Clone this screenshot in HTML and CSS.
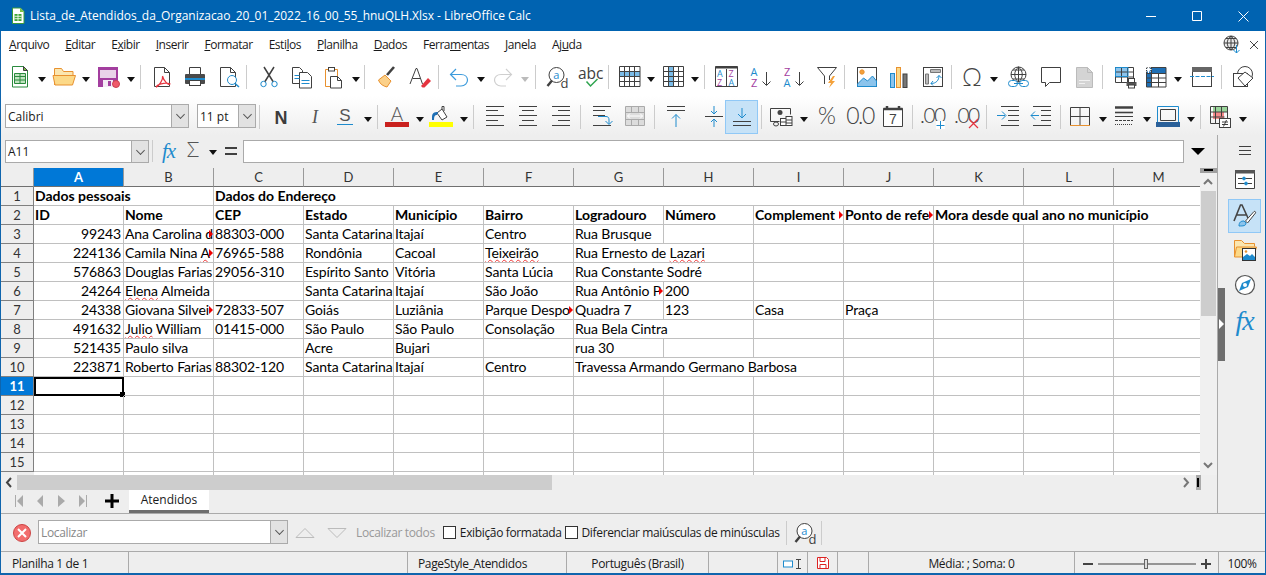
FILE: index.html
```html
<!DOCTYPE html>
<html lang="pt-BR">
<head>
<meta charset="utf-8">
<title>Lista_de_Atendidos - LibreOffice Calc</title>
<link rel="stylesheet" href="styles.css">
</head>
<body>
<div class="window">
  <header class="titlebar">
    <svg class="appicon" viewBox="0 0 14 18"><path fill="#fff" stroke="#3a9a3a" d="M1.5 1h8l3.500 3.500v12h-11.500z"/><path fill="#7ac143" d="M9 1l4 4H9z"/><path fill="#3fa535" d="M3.500 7h7v7h-7z"/><path stroke="#fff" stroke-width=".8" d="M3.500 9.300h7M3.500 11.700h7M7 7v7"/></svg>
    <span class="title">Lista_de_Atendidos_da_Organizacao_20_01_2022_16_00_55_hnuQLH.Xlsx - LibreOffice Calc</span>
    <div class="winctl">
      <svg viewBox="-18 0 46 20"><path d="M0 10.500h10" stroke="#fff"/></svg>
      <svg viewBox="-18 0 46 20"><path d="M.5 5.500h9v9h-9z" stroke="#fff" fill="none"/></svg>
      <svg viewBox="-18 0 46 20"><path d="M.5 5.500l10 10M10.500 5.500l-10 10" stroke="#fff" fill="none"/></svg>
    </div>
  </header>

  <nav class="menubar">
    <span><u>A</u>rquivo</span><span><u>E</u>ditar</span><span>E<u>x</u>ibir</span><span><u>I</u>nserir</span><span><u>F</u>ormatar</span><span>Esti<u>l</u>os</span><span><u>P</u>lanilha</span><span><u>D</u>ados</span><span>Ferra<u>m</u>entas</span><span><u>J</u>anela</span><span>Aj<u>u</u>da</span>
    <div class="menuend">
      <svg class="i" viewBox="0 0 24 24"><circle cx="11" cy="10" r="7" fill="#e9e9e9"/><path d="M4 10h14M11 3v14M6 5.500h10M6 14.500h10M11 3c-5 4-5 10 0 14M11 3c5 4 5 10 0 14"/><path stroke="#1e8bcd" d="M16.500 12v8M13.500 17l3 3 3-3"/></svg>
      <svg class="x" viewBox="0 0 10 10"><path d="M1 1l8 8M9 1l-8 8" stroke="#444" fill="none"/></svg>
    </div>
  </nav>

  <div class="tb tb1">
    <svg class="i" viewBox="0 0 24 24"><path fill="#fff" stroke="#2a8a3e" d="M4.500 1.500h11l4 4v16.500h-15z"/><path fill="#7ac143" d="M15.500 1.500l4 4h-4z"/><path fill="#bfe3bf" stroke="#2a8a3e" d="M6.500 8.500h11v10h-11z"/><path stroke="#2a8a3e" d="M6.500 11.500h11M6.500 15h11M12 8.500v10"/></svg>
    <i class="dd"></i>
    <svg class="i" viewBox="0 0 24 24"><path fill="#fbe6b0" stroke="#e8912f" d="M2.500 20V3.500h7l2 3h9.500v4"/><path fill="#fcd988" stroke="#e8912f" d="M1 10.500h22.500l-3 9.500h-17.500z"/></svg>
    <i class="dd"></i>
    <svg class="i" viewBox="0 0 24 24"><rect x="1" y="2" width="20" height="20" fill="#a33e9f" stroke="none"/><rect x="3" y="5" width="16" height="8" fill="#e9d3e9" stroke="none"/><rect x="6" y="15" width="10" height="7" fill="#f4eaf4" stroke="none"/><rect x="11" y="16" width="3" height="5" fill="#a33e9f" stroke="none"/><circle cx="19" cy="19" r="3.500" fill="#f05a6a" stroke="#c9414f"/></svg>
    <i class="dd"></i>
    <i class="sep"></i>
    <svg class="i" viewBox="0 0 24 24"><path fill="#fff" d="M3.500 2.500h10l5 5v14h-15z"/><path d="M13.500 2.500v5h5"/><path stroke="#e5343f" stroke-width="1.200" d="M11.500 11c1 4-4 10-6 11-1-2.500 9-5 13.500-3-1.500 2-6.500-3.500-7.500-8z"/></svg>
    <svg class="i" viewBox="0 0 24 24"><path fill="#fff" d="M6.500 9V2.500h11V9"/><rect x="2" y="9" width="20" height="10" rx="1" fill="#4a4a4a" stroke="none"/><rect x="2" y="13" width="20" height="2" fill="#1e8bcd" stroke="none"/><rect x="6.500" y="15.500" width="11" height="5" fill="#fff"/></svg>
    <svg class="i" viewBox="0 0 24 24"><path fill="#fff" d="M3.500 2.500h10l5 5v14h-15z"/><path d="M13.500 2.500v5h5"/><circle cx="15" cy="15" r="4.500" fill="#fff" stroke="#1e8bcd"/><path stroke="#1e8bcd" stroke-width="1.600" d="M18 18.500l4 3.500"/></svg>
    <i class="sep"></i>
    <svg class="i" viewBox="0 0 24 24"><circle cx="6.500" cy="19" r="2.700" stroke="#1e8bcd"/><circle cx="17.500" cy="19" r="2.700" stroke="#1e8bcd"/><path stroke-width="1.500" d="M8 16.500L17 2M16 16.500L7 2"/></svg>
    <svg class="i" viewBox="0 0 24 24"><path fill="#fff" d="M2.500 2.500h7l3 3v13h-10z"/><path fill="#fff" d="M9.500 7.500h8l4 4v11.500h-12z"/><path stroke="#1e8bcd" d="M4.500 10.500h5M4.500 13.500h5M11.500 15.500h8M11.500 18.500h8"/></svg>
    <svg class="i" viewBox="0 0 24 24"><path fill="#fff" stroke="#e8912f" d="M4.500 4.500h12v17h-12z"/><rect x="7.500" y="2.500" width="6" height="3.500" fill="#fff"/><path fill="#fff" d="M9.500 11.500h7l4 4v7.500h-11z"/><path d="M16.500 11.500v4h4"/></svg>
    <i class="dd"></i>
    <i class="sep"></i>
    <svg class="i" viewBox="0 0 24 24"><path stroke-width="2.600" d="M20 2l-7 8"/><path fill="#fbd089" stroke="#e8912f" d="M4.500 15l6.500-5 6 6-4 6c-3-.5-7.500-3-8.500-7z"/></svg>
    <svg class="i" viewBox="0 0 24 24"><path d="M3 19L9 3.500h1L15.500 19M5.500 13.500h8"/><path fill="#e5343f" stroke="none" d="M14 21l7-8 3 3-6.500 6.500h-2z"/></svg>
    <i class="sep"></i>
    <svg class="i" viewBox="0 0 24 24"><path stroke="#3d9bdc" stroke-width="1.200" d="M4 9.500h10c4 0 6.500 2.500 6.500 5.500s-2.500 6-6.500 6H9M9 4L3.500 9.500 9 15"/></svg>
    <i class="dd"></i>
    <svg class="i" viewBox="0 0 24 24"><path stroke="#cfcfcf" stroke-width="1.200" d="M20 9.500H10c-4 0-6.500 2.500-6.500 5.500s2.500 6 6.500 6h5M15 4l5.500 5.500L15 15"/></svg>
    <i class="dd off"></i>
    <i class="sep"></i>
    <svg class="i" viewBox="0 0 24 24"><circle cx="11.500" cy="10" r="7.500" fill="#fff"/><path stroke-width="2.400" d="M7 15.500L2.500 21"/><text x="8.200" y="13.500" font-size="11" fill="#1e8bcd" stroke="none">a</text><text x="15.500" y="22.500" font-size="13" fill="#404040" stroke="none">d</text></svg>
    <svg class="i" viewBox="0 0 24 24"><text x="0" y="13.500" font-size="15.500" fill="#404040" stroke="none">abc</text><path stroke="#2ea44f" stroke-width="1.500" d="M8.500 16.500l4 4.500 7-7"/></svg>
    <i class="sep"></i>
    <svg class="i" viewBox="0 0 24 24"><path fill="#7bbce8" stroke="none" d="M3 7h20v5H3z"/><path fill="none" d="M2.500 1.500h20.500v20H2.500zM2.500 6.500h20.500M2.500 11.500h20.500M2.500 16.500h20.500M7.500 1.500v20M12.500 1.500v20M17.500 1.500v20"/></svg>
    <i class="dd"></i>
    <svg class="i" viewBox="0 0 24 24"><path fill="#7bbce8" stroke="none" d="M8 2h5v20H8z"/><path fill="none" d="M2.500 1.500h20v20h-20zM2.500 6.500h20M2.500 11.500h20M2.500 16.500h20M7.500 1.500v20M12.500 1.500v20M17.500 1.500v20"/></svg>
    <i class="dd"></i>
    <i class="sep"></i>
    <svg class="i" viewBox="0 0 24 24"><path d="M1.500 1.500h22v20h-22zM12.500 4v17"/><path stroke-width="2" d="M1.500 2.500h22"/><text x="3" y="12" font-size="9" fill="#1e8bcd" stroke="none">A</text><text x="3" y="20.500" font-size="9" fill="#a33e9f" stroke="none">Z</text><text x="14.500" y="12" font-size="9" fill="#a33e9f" stroke="none">Z</text><text x="14.500" y="20.500" font-size="9" fill="#1e8bcd" stroke="none">A</text></svg>
    <svg class="i" viewBox="0 0 24 24"><text x="1.500" y="10.500" font-size="11" fill="#1e8bcd" stroke="none">A</text><text x="2" y="21.500" font-size="11" fill="#a33e9f" stroke="none">Z</text><path d="M17.500 7v13M13.500 16.500l4 4 4-4"/></svg>
    <svg class="i" viewBox="0 0 24 24"><text x="2" y="10.500" font-size="11" fill="#a33e9f" stroke="none">Z</text><text x="1.500" y="21.500" font-size="11" fill="#1e8bcd" stroke="none">A</text><path d="M17.500 7v13M13.500 16.500l4 4 4-4"/></svg>
    <svg class="i" viewBox="0 0 24 24"><path d="M2.500 2.500h19l-7 8.500v4M9.500 19v-8l-7-8.500"/><path fill="#f4a13a" stroke="none" d="M18 11l-5 7h3l-2 5 6-7h-3l3-5z"/></svg>
    <i class="sep"></i>
    <svg class="i" viewBox="0 0 24 24"><rect x="2.500" y="2.500" width="19" height="19" fill="#fff"/><circle cx="7" cy="7" r="2.200" fill="#f4a13a" stroke="#e8912f"/><path fill="#8cc4ec" stroke="#1e8bcd" d="M2.500 19l6-6 4 3 5-5 4 5v5.500h-19z"/></svg>
    <svg class="i" viewBox="0 0 24 24"><rect x="3.500" y="8.500" width="4" height="14" fill="#8cc4ec" stroke="#1e8bcd"/><rect x="9.500" y="2.500" width="4" height="20" fill="#fcd988" stroke="#e8912f"/><rect x="16" y="9" width="4" height="13.500" fill="#777"/></svg>
    <svg class="i" viewBox="0 0 24 24"><rect x="2.500" y="2.500" width="19" height="19" fill="#fff"/><path fill="#bbb" stroke="#777" d="M4.500 9h3v10h-3zM9.500 4.500h10v3h-10z"/><path stroke="#1e8bcd" d="M10 18.500c5 0 8-3 8-8M15.500 13l2.500-2.500 2.500 2.500M12 16l-2 2.500 2 2"/></svg>
    <i class="sep"></i>
    <svg class="i" viewBox="0 0 24 24"><text x="12" y="21" font-size="25" fill="#444" stroke="none" text-anchor="middle" class="tlight">Ω</text></svg>
    <i class="dd"></i>
    <svg class="i" viewBox="0 0 24 24"><circle cx="12.500" cy="9.500" r="7.500"/><path d="M5 9.500h15M12.500 2v15M7 5h11M7 14h11M12.500 2c-5 4-5 11 0 15M12.500 2c5 4 5 11 0 15"/><rect x="2.500" y="15.500" width="9" height="6" rx="3" fill="#fff" stroke="#1e8bcd"/><rect x="13.500" y="15.500" width="9" height="6" rx="3" fill="#fff" stroke="#1e8bcd"/><path stroke="#1e8bcd" d="M8 18.500h9"/></svg>
    <svg class="i" viewBox="0 0 24 24"><path fill="#fff" d="M2.500 2.500h19v15h-11l-4 4v-4h-4z"/></svg>
    <svg class="i" viewBox="0 0 24 24"><path fill="#d4d4d4" stroke="#bbb" d="M4.500 2.500h11l5 5v15h-16z"/><path stroke="#f1f1f1" d="M7 15.500h11M7 18.500h6"/><path stroke="#bbb" d="M15.500 2.500v5h5"/></svg>
    <i class="sep"></i>
    <svg class="i" viewBox="0 0 24 24"><path fill="#8cc4ec" stroke="none" d="M2 2h13v9H2z"/><path fill="none" d="M2.500 2.500h18v15h-18zM2.500 7h18M2.500 12h18M8.500 2.500v15M14.500 2.500v15"/><path stroke="#1e8bcd" d="M2.500 2.500h12.500v9H2.500z"/><rect x="13.500" y="17" width="10" height="4" fill="#555" stroke="none"/><rect x="15.500" y="13.500" width="6" height="4" fill="#fff"/><rect x="15.500" y="20" width="6" height="3" fill="#fff"/></svg>
    <svg class="i" viewBox="0 0 24 24"><path fill="#1e6fb5" stroke="none" d="M2 3h20v5H2zM2 3h5v19H2z"/><path fill="none" d="M2.500 2.500h19.500v19.500H2.500zM2.500 8.500H22M2.500 13h19.500M2.500 17.500h19.500M7.500 2.500v19.500M14.500 8.500v13.500"/><path stroke="#fff" d="M4.500 1v7M1.500 4.500h6M2.500 2l4 5M6.500 2l-4 5"/></svg>
    <i class="dd"></i>
    <svg class="i" viewBox="0 0 24 24"><rect x="2.500" y="2.500" width="19" height="19" fill="#fff"/><rect x="2" y="2" width="20" height="5" fill="#666" stroke="none"/><path stroke="#1e8bcd" stroke-dasharray="4 1.500" d="M0 11.500h24"/></svg>
    <i class="sep"></i>
    <svg class="i" viewBox="0 0 24 24"><circle cx="14" cy="9" r="7.500" fill="#fff"/><rect x="2.500" y="8.500" width="14" height="13" fill="#fff"/><path fill="#fff" d="M14 7l8 6-8 8-7-8z"/></svg>
  </div>

  <div class="tb tb2">
    <div class="combo font"><span>Calibri</span><b class="arrow"></b></div>
    <div class="combo size"><span>11 pt</span><b class="arrow"></b></div>
    <i class="sep"></i>
    <svg class="i" viewBox="0 0 24 24"><text x="12" y="18.500" font-size="18" font-weight="700" fill="#3c3c3c" stroke="none" text-anchor="middle" class="tsans">N</text></svg>
    <svg class="i" viewBox="0 0 24 24"><text x="12" y="18" font-size="18" font-style="italic" fill="#555" stroke="none" text-anchor="middle" class="tserif">I</text></svg>
    <svg class="i" viewBox="0 0 24 24"><text x="12" y="16" font-size="17" fill="#555" stroke="none" text-anchor="middle" class="tsans">S</text><path stroke="#1e8bcd" d="M4 19.500h16"/></svg>
    <i class="dd"></i>
    <i class="sep"></i>
    <svg class="i" viewBox="0 0 24 24"><text x="12" y="16" font-size="19" fill="#555" stroke="none" text-anchor="middle" class="tlight">A</text><rect y="17" width="24" height="5" fill="#c9211e" stroke="none"/></svg>
    <i class="dd"></i>
    <svg class="i" viewBox="0 0 24 24"><path fill="#fff" d="M8 8l5-4 5 8-5 3z"/><path d="M13 4V1.500h2V6"/><path fill="#1e6fb5" stroke="none" d="M3 12c0-4 2-5 6-5l-1 3c-2 0-3 1-3 5H3z"/><rect y="17" width="24" height="5" fill="#ffff00" stroke="none"/></svg>
    <i class="dd"></i>
    <i class="sep"></i>
    <svg class="i" viewBox="0 0 24 24"><path d="M3 1.500h18M3 5.500h12M3 10.500h18M3 15.500h12M3 20.500h18"/></svg>
    <svg class="i" viewBox="0 0 24 24"><path d="M3 1.500h18M6 5.500h12M3 10.500h18M6 15.500h12M3 20.500h18"/></svg>
    <svg class="i" viewBox="0 0 24 24"><path d="M3 1.500h18M9 5.500h12M3 10.500h18M9 15.500h12M3 20.500h18"/></svg>
    <i class="sep"></i>
    <svg class="i" viewBox="0 0 24 24"><path d="M3 1.500h18M3 5.500h12M3 10.500h12M3 20.500h18"/><path stroke="#1e8bcd" d="M8 11.500h8c2 0 3 1 3 3.500v4M15.500 16l3.500 3.500 3.500-3.500"/></svg>
    <svg class="i" viewBox="0 0 24 24"><path fill="#dcdcdc" stroke="#aaa" d="M2.500 1.500h19v19h-19z"/><path stroke="#aaa" d="M2.500 7.500h19M2.500 14.500h19M8.500 1.500v6M15.500 1.500v6M8.500 14.500v6M15.500 14.500v6"/><path stroke="#fff" d="M4.500 11h15M7 8.500L4.500 11 7 13.500M17 8.500l2.500 2.500-2.500 2.500"/></svg>
    <i class="sep"></i>
    <svg class="i" viewBox="0 0 24 24"><path stroke-width="1.200" d="M3 1.500h18M3 5.500h18"/><path stroke="#1e8bcd" d="M12 22V9.500M8 13.500l4-4 4 4"/></svg>
    <div class="selbtn">
      <svg class="i" viewBox="0 0 24 24"><path d="M3 11.500h18"/><path stroke="#1e8bcd" d="M12 1v8M9 6l3 3 3-3M12 22v-8M9 17l3-3 3 3"/></svg>
    </div>
    <div class="selbtn on">
      <svg class="i" viewBox="0 0 24 24"><path stroke-width="1.200" d="M3 16.500h18M3 20.500h18"/><path stroke="#1e8bcd" d="M12 3v10M8 9l4 4 4-4"/></svg>
    </div>
    <i class="sep"></i>
    <svg class="i" viewBox="0 0 24 24"><path d="M1.500 3.500h20v6M1.500 3.500v13h9"/><circle cx="11" cy="7.500" r="2.500" fill="#444" stroke="none"/><rect x="11.500" y="13.500" width="6" height="7" fill="#fff"/><rect x="17" y="11.500" width="6" height="9" fill="#fff"/><path d="M11.500 17h6M17 15h6M17 18h6"/><ellipse cx="7" cy="19" rx="2.500" ry="2"/></svg>
    <i class="dd"></i>
    <svg class="i" viewBox="0 0 24 24"><text x="12" y="19" font-size="23" fill="#444" stroke="none" text-anchor="middle" class="tlight">%</text></svg>
    <svg class="i" viewBox="0 0 24 24"><text x="12" y="19" font-size="23" fill="#444" stroke="none" text-anchor="middle" class="tlight squeeze">0.0</text></svg>
    <svg class="i" viewBox="0 0 24 24"><path fill="#fff" d="M2.500 3.500h19v18h-19z"/><path stroke-width="2.500" d="M2.500 4h19M6 1v3M18 1v3"/><text x="12" y="19" font-size="14" fill="#444" stroke="none" text-anchor="middle" class="tsans">7</text></svg>
    <i class="sep"></i>
    <svg class="i" viewBox="0 0 24 24"><text x="-1" y="18" font-size="21" fill="#444" stroke="none" class="tlight squeeze">.00</text><path fill="#fff" stroke="none" d="M15 16h9v8h-9z"/><path stroke="#1e8bcd" d="M19.500 16v8M15.500 20.500h8"/></svg>
    <svg class="i" viewBox="0 0 24 24"><text x="-1" y="18" font-size="21" fill="#444" stroke="none" class="tlight squeeze">.00</text><path stroke="#e5343f" stroke-width="1.200" d="M14 14l9 9M23 14l-9 9"/></svg>
    <i class="sep"></i>
    <svg class="i" viewBox="0 0 24 24"><path d="M5 1.500h18M12 5.500h11M12 10.500h11M12 15.500h11M5 20.500h18"/><path stroke="#1e8bcd" d="M1 10.500h8M6 6.500l4 4-4 4"/></svg>
    <svg class="i" viewBox="0 0 24 24"><path d="M4 1.500h18M12 5.500h10M12 10.500h10M12 15.500h10M4 20.500h18"/><path stroke="#1e8bcd" d="M10 10.500H2M6 6.500l-4 4 4 4"/></svg>
    <i class="sep"></i>
    <svg class="i" viewBox="0 0 24 24"><path d="M2.500 2.500h19v18M2.500 2.500v18M12 2.500v18M2.500 11.500h19"/><path stroke="#e8912f" d="M2 20.500h20"/></svg>
    <i class="dd"></i>
    <svg class="i" viewBox="0 0 24 24"><path stroke-width="2.500" d="M3 2.500h18"/><path stroke-width="1.600" d="M3 7.500h18"/><path d="M3 11.500h18"/><path stroke-dasharray="3 1" d="M3 15.500h18"/><path stroke-dasharray="1 1" d="M3 19.500h18"/></svg>
    <i class="dd"></i>
    <svg class="i" viewBox="0 0 24 24"><path stroke="#1e8bcd" d="M1.500 1.500h21v16"/><path stroke="#1e8bcd" d="M1.500 1.500v16"/><path d="M4.500 4.500h15v11h-15z"/><rect y="17" width="24" height="5" fill="#2a6099" stroke="none"/></svg>
    <i class="dd"></i>
    <i class="sep"></i>
    <svg class="i" viewBox="0 0 24 24"><path fill="#9ad49a" stroke="none" d="M5 2h14v5H5z"/><path fill="#f68a8a" stroke="none" d="M5 7h11v7H5z"/><path d="M2.500 1.500h17v14M2.500 1.500v17h9M2.500 7h17M2.500 12h14M7.500 1.500v17M13.500 1.500v10"/><rect x="11.500" y="13.500" width="11" height="9" fill="#fff"/><path d="M14 17h6M14 19.500h6M18.500 15l-3 6.500"/></svg>
    <i class="dd"></i>
  </div>

  <div class="body">
    <div class="work">
      <div class="formula">
        <div class="combo namebox"><span>A11</span><b class="arrow"></b></div>
        <i class="sep"></i>
        <span class="fx">fx</span>
        <svg class="i sigma" viewBox="0 0 24 24"><text x="12" y="18" font-size="21" fill="#555" stroke="none" text-anchor="middle" class="tlight">Σ</text></svg>
        <i class="dd"></i>
        <svg class="i equals" viewBox="0 0 24 24"><path stroke-width="2" d="M6 9h12M6 15h12"/></svg>
        <div class="input"></div>
        <i class="bigdd"></i>
      </div>
      <div class="sheetrow">
        <div class="clip">
          <table class="sheet">
            <colgroup><col class="rh"><col span="12" class="c"><col class="c"></colgroup>
            <thead>
              <tr><th class="rh"></th><th class="on">A</th><th>B</th><th>C</th><th>D</th><th>E</th><th>F</th><th>G</th><th>H</th><th>I</th><th>J</th><th>K</th><th>L</th><th>M</th></tr>
            </thead>
            <tbody>
              <tr><th>1</th><td colspan="2" class="b">Dados pessoais</td><td colspan="9" class="b">Dados do Endereço</td><td></td><td></td></tr>
              <tr><th>2</th><td class="b">ID</td><td class="b">Nome</td><td class="b">CEP</td><td class="b">Estado</td><td class="b">Município</td><td class="b">Bairro</td><td class="b">Logradouro</td><td class="b">Número</td><td class="b cl">Complement</td><td class="b cl">Ponto de refe</td><td class="b ov">Mora desde qual ano no município</td><td class="nr"></td><td></td></tr>
              <tr><th>3</th><td class="n">99243</td><td class="cl">Ana Carolina d</td><td>88303-000</td><td>Santa Catarina</td><td>Itajaí</td><td>Centro</td><td>Rua Brusque</td><td></td><td></td><td></td><td></td><td></td><td></td></tr>
              <tr><th>4</th><td class="n">224136</td><td class="cl">Camila Nina <span class="wv">A</span></td><td>76965-588</td><td>Rondônia</td><td>Cacoal</td><td><span class="wv">Teixeirão</span></td><td class="ov">Rua Ernesto de <span class="wv">Lazari</span></td><td></td><td></td><td></td><td></td><td></td><td></td></tr>
              <tr><th>5</th><td class="n">576863</td><td>Douglas Farias</td><td>29056-310</td><td>Espírito Santo</td><td>Vitória</td><td>Santa Lúcia</td><td class="ov">Rua Constante Sodré</td><td></td><td></td><td></td><td></td><td></td><td></td></tr>
              <tr><th>6</th><td class="n">24264</td><td><span class="wv">Elena</span> Almeida</td><td></td><td>Santa Catarina</td><td>Itajaí</td><td>São João</td><td class="cl">Rua Antônio P</td><td>200</td><td></td><td></td><td></td><td></td><td></td></tr>
              <tr><th>7</th><td class="n">24338</td><td class="cl">Giovana Silvei</td><td>72833-507</td><td>Goiás</td><td>Luziânia</td><td class="cl">Parque Despo</td><td>Quadra 7</td><td>123</td><td>Casa</td><td>Praça</td><td></td><td></td><td></td></tr>
              <tr><th>8</th><td class="n">491632</td><td><span class="wv">Julio</span> William</td><td>01415-000</td><td>São Paulo</td><td>São Paulo</td><td>Consolação</td><td class="ov">Rua Bela Cintra</td><td></td><td></td><td></td><td></td><td></td><td></td></tr>
              <tr><th>9</th><td class="n">521435</td><td>Paulo silva</td><td></td><td>Acre</td><td>Bujari</td><td></td><td>rua 30</td><td></td><td></td><td></td><td></td><td></td><td></td></tr>
              <tr><th>10</th><td class="n">223871</td><td>Roberto Farias</td><td>88302-120</td><td>Santa Catarina</td><td>Itajaí</td><td>Centro</td><td class="ov">Travessa Armando Germano Barbosa</td><td class="nr"></td><td></td><td></td><td></td><td></td><td></td></tr>
              <tr class="cur"><th class="on">11</th><td class="cursor"><i class="handle"></i></td><td></td><td></td><td></td><td></td><td></td><td></td><td></td><td></td><td></td><td></td><td></td><td></td></tr>
              <tr><th>12</th><td></td><td></td><td></td><td></td><td></td><td></td><td></td><td></td><td></td><td></td><td></td><td></td><td></td></tr>
              <tr><th>13</th><td></td><td></td><td></td><td></td><td></td><td></td><td></td><td></td><td></td><td></td><td></td><td></td><td></td></tr>
              <tr><th>14</th><td></td><td></td><td></td><td></td><td></td><td></td><td></td><td></td><td></td><td></td><td></td><td></td><td></td></tr>
              <tr><th>15</th><td></td><td></td><td></td><td></td><td></td><td></td><td></td><td></td><td></td><td></td><td></td><td></td><td></td></tr>
              <tr class="last"><th></th><td></td><td></td><td></td><td></td><td></td><td></td><td></td><td></td><td></td><td></td><td></td><td></td><td></td></tr>
            </tbody>
          </table>
        </div>
        <div class="vscroll">
          <div class="vsplit"><i></i></div>
          <svg class="sa" viewBox="0 0 16 18"><path d="M4 11l4-4 4 4" stroke="#777" stroke-width="2" fill="none"/></svg>
          <div class="vthumb"></div>
          <svg class="sa down" viewBox="0 0 16 18"><path d="M4 7l4 4 4-4" stroke="#777" stroke-width="2" fill="none"/></svg>
        </div>
      </div>
      <div class="hscroll">
        <svg class="sa h" viewBox="0 0 16 15"><path d="M10 3L6 7.500l4 4.500" stroke="#444" stroke-width="2" fill="none"/></svg>
        <div class="hthumb"></div>
        <svg class="sa h end" viewBox="0 0 16 15"><path d="M6 3l4 4.500L6 12" stroke="#777" stroke-width="2" fill="none"/></svg>
        <div class="hsplit"><i></i></div>
      </div>
      <div class="tabs">
        <svg class="nav" viewBox="0 0 90 16"><path fill="#aaa" d="M1 2h1v12H1zM9 2v12L3 8zM29 2v12l-6-6zM44 2l7 6-7 6zM65 2l6 6-6 6zM72 2h1v12h-1z"/></svg>
        <svg class="plus" viewBox="0 0 14 14"><path d="M7 0v14M0 7h14" stroke="#000" stroke-width="3"/></svg>
        <div class="tab">Atendidos</div>
      </div>
    </div>
    <aside class="sidebar">
      <div class="handle2"><i></i></div>
      <svg class="si menuic" viewBox="0 0 24 24"><path d="M6 8.500h12M6 12.500h12M6 16.500h12"/></svg>
      <svg class="si" viewBox="0 0 24 24"><path fill="#fff" d="M2.500 2.500h19v18h-19z"/><rect x="2" y="2" width="20" height="3.500" fill="#555" stroke="none"/><path d="M5 10.500h14M5 15.500h14"/><circle cx="11" cy="10.500" r="1.400" fill="#1e8bcd" stroke="#1e8bcd"/><circle cx="13" cy="15.500" r="1.400" fill="#1e8bcd" stroke="#1e8bcd"/></svg>
      <div class="sibtn"><svg class="si" viewBox="0 0 24 24"><path stroke-width="1.600" stroke="#444" d="M1 17L7.500 1h1.500L15 14M4 11h9"/><path fill="#8cc4ec" stroke="#1e8bcd" d="M6 22c0-4 2-5 5-5l2 2c0 3-3 3-7 3z"/><path stroke="#444" fill="#fff" d="M12.500 17L21 7.500c1-.5 2 .5 1.500 1.500L14.500 19z"/></svg></div>
      <svg class="si" viewBox="0 0 24 24"><path fill="#fbe6b0" stroke="#e8912f" d="M1.500 19V2.500h7l3 3h10v3"/><path fill="#fcd988" stroke="#e8912f" d="M1.500 19l2-10h20l-3 10z"/><rect x="9.500" y="10.500" width="13" height="12" fill="#fff" stroke="#333"/><circle cx="13" cy="13.500" r="1.300" fill="#e8912f" stroke="none"/><path fill="#1e8bcd" stroke="none" d="M10 22v-3l4-3 3 2 2-2 3 3v3z"/></svg>
      <svg class="si" viewBox="0 0 24 24"><circle cx="12" cy="12" r="9.500" fill="#fff" stroke="#555" stroke-width="1.200"/><path fill="#1e8bcd" stroke="none" d="M18 6l-3 8-9 4 3-8z"/><circle cx="12" cy="12" r="2" fill="#fff" stroke="none"/></svg>
      <span class="fx fxlg">fx</span>
    </aside>
  </div>

  <div class="findbar">
    <svg class="err" viewBox="0 0 18 18"><circle cx="9" cy="9" r="8.500" fill="#f26d6d" stroke="#c44"/><path d="M5 5l8 8M13 5l-8 8" stroke="#fff" stroke-width="2"/></svg>
    <div class="combo findc"><span>Localizar</span><b class="arrow"></b></div>
    <svg class="tri" viewBox="0 0 20 10"><path d="M1 9.500L10 .5l9 9z" fill="none" stroke="#bbb"/></svg>
    <svg class="tri" viewBox="0 0 20 10"><path d="M1 .5L10 9.500l9-9z" fill="none" stroke="#bbb"/></svg>
    <span class="dim">Localizar todos</span>
    <i class="chk"></i><span>Exibição formatada</span>
    <i class="chk"></i><span>Diferenciar maiúsculas de minúsculas</span>
    <i class="sep"></i>
    <svg class="i" viewBox="0 0 24 24"><circle cx="11.500" cy="10" r="7.500" fill="#fff"/><path stroke-width="2.400" d="M7 15.500L2.500 21"/><text x="8.200" y="13.500" font-size="11" fill="#1e8bcd" stroke="none">a</text><text x="15.500" y="22.500" font-size="13" fill="#404040" stroke="none">d</text></svg>
    <i class="sep"></i>
  </div>

  <footer class="status">
    <span>Planilha 1 de 1</span>
    <span></span>
    <span class="pg">PageStyle_Atendidos</span>
    <span class="ctr">Português (Brasil)</span>
    <span></span>
    <span class="ctr"><svg class="st" viewBox="0 0 20 14"><rect x=".5" y="4" width="9" height="6" fill="#fff" stroke="#1e8bcd"/><path d="M13 2.500h5M15.500 2.500v9M13 11.500h5" stroke="#444" fill="none"/></svg></span>
    <span class="ctr"><svg class="st sm" viewBox="0 0 12 12"><path d="M.5.500h9l2 2v9H.5z" fill="#fff" stroke="#d22"/><path d="M3 .5v4h5v-4M3 11.500v-4h6v4" fill="none" stroke="#d22"/></svg></span>
    <span></span>
    <span class="ctr">Média: ; Soma: 0</span>
    <span class="zoom">
      <svg viewBox="0 0 132 12"><path d="M3 6h10" stroke="#444" stroke-width="2"/><path d="M18 6h98" stroke="#777" stroke-width="1.500"/><rect x="64.500" y="1.500" width="3" height="9" fill="#ddd" stroke="#666"/><path d="M121 6h10M126 1v10" stroke="#444" stroke-width="2"/></svg>
    </span>
    <span class="ctr">100%</span>
  </footer>
</div>
</body>
</html>
```
FILE: styles.css
```css
* { box-sizing: border-box; }
html, body { margin: 0; padding: 0; overflow: hidden; }
body { width: 1266px; height: 575px; font: 12px "Open Sans", "Noto Sans", sans-serif; color: #1a1a1a; }
.window { width: 1266px; height: 575px; display: flex; flex-direction: column; background: #eee; border-left: 1px solid #0f65ad; border-right: 1px solid #0f65ad; border-bottom: 2px solid #0f65ad; }

.titlebar { flex: none; height: 31px; margin: 0 -1px; padding-left: 11px; display: flex; align-items: center; background: #0063b1; color: #fff; }
.appicon { width: 14px; height: 18px; margin-right: 5px; }
.title { font-size: 12px; letter-spacing: -.03px; white-space: nowrap; }
.winctl { margin-left: auto; display: flex; padding-right: 0; }
.winctl svg { width: 46px; height: 20px; }

.menubar { flex: none; height: 27px; padding-left: 8px; display: flex; align-items: center; gap: 16px; background: #fff; letter-spacing: -.47px; white-space: nowrap; }
.menuend { margin-left: auto; display: flex; align-items: center; gap: 5px; padding-right: 6px; }
.x { width: 10px; height: 10px; }

.i { display: block; width: 24px; height: 24px; overflow: visible; fill: none; stroke: #404040; stroke-width: 1; font-family: "Open Sans", sans-serif; flex: none; }
.tsans { font-family: "Liberation Sans", sans-serif; }
.tserif { font-family: "Liberation Serif", serif; }
.tlight { font-family: Lato, "Open Sans", sans-serif; font-weight: 300; }
.squeeze { letter-spacing: -1.5px; }

.tb { flex: none; display: grid; grid-auto-flow: column; align-items: center; justify-items: start; }
.tb1 { height: 38px; padding-left: 7px; background: #fff;
  grid-template-columns: 30px 14px 30px 15px 30px 13px 11px 32px 34px 29px 11px 33px 31px 31px 12px 10px 33px 31px 9px 30px 14px 30px 14px 10px 33px 30px 9px 30px 14px 30px 13px 10px 35px 33px 33px 29px 11px 32px 34px 30px 9px 30px 16px 33px 33px 30px 11px 31px 30px 16px 31px 10px 24px; }
.tb2 { height: 39px; padding: 3px 0 0 4px; background: linear-gradient(#fff, #eee);
  grid-template-columns: 192px 62px 10px 34px 30px 31px 13px 8px 31px 13px 31px 13px 10px 33px 33px 31px 10px 33px 31px 10px 33px 28px 36px 8px 31px 15px 33px 33px 31px 9px 34px 31px 10px 33px 31px 8px 31px 13px 31px 13px 31px 13px 8px 31px 10px; }

.dd { display: block; width: 0; height: 0; margin-top: 4px; border-left: 4.5px solid transparent; border-right: 4.5px solid transparent; border-top: 5px solid #111; }
.dd.off { border-top-color: #bbb; }
.sep { display: block; width: 1px; height: 24px; background: #ccc; }

.combo { display: flex; background: #fff; border: 1px solid #aaa; height: 24px; align-items: stretch; }
.combo span { flex: 1; padding: 0 0 0 2px; line-height: 24px; white-space: nowrap; overflow: hidden; }
.combo .arrow { width: 17px; flex: none; background: #e2e2e2; border-left: 1px solid #aaa; position: relative; }
.combo .arrow::after { content: ""; position: absolute; left: 5px; top: 6px; width: 6px; height: 6px; border-right: 1px solid #555; border-bottom: 1px solid #555; transform: rotate(45deg) scale(.9); }
.font { width: 184px; align-self: start; margin-top: 5px; }
.size { width: 59px; align-self: start; margin-top: 5px; }
.selbtn { width: 33px; height: 34px; display: flex; align-items: center; justify-content: center; border: 1px solid transparent; margin-top: -1px; }
.selbtn.on { background: #c6e2f7; border-color: #90c8f6; }

.body { flex: 1; min-height: 0; display: flex; border-bottom: 1px solid #aaa; }
.work { flex: none; width: 1216px; display: flex; flex-direction: column; }
.formula { flex: none; height: 33px; padding: 5px 0 0 4px; display: flex; align-items: flex-start; position: relative; }
.namebox { width: 144px; height: 23px; }
.namebox span { line-height: 21px; }
.formula .sep { height: 22px; margin: 0 0 0 3px; }
.fx { font: italic 21px "Liberation Serif", serif; color: #1e8bcd; letter-spacing: -1px; margin-left: 9px; line-height: 22px; }
.sigma { margin-left: 6px; margin-top: -1px; }
.formula .dd { margin: 10px 0 0 4px; }
.equals { margin-left: 2px; margin-top: -1px; }
.input { width: 941px; height: 23px; margin-left: 0; background: #fff; border: 1px solid #aaa; }
.bigdd { display: block; width: 0; height: 0; margin: 8px 0 0 7px; border-left: 7.5px solid transparent; border-right: 7.5px solid transparent; border-top: 7px solid #000; }

.sheetrow { flex: 1; min-height: 0; display: flex; }
.clip { flex: none; width: 1199px; height: 100%; overflow: hidden; background: #fff; }
.sheet { table-layout: fixed; width: 1203px; border-collapse: separate; border-spacing: 0; font: 14px Lato, "Liberation Sans", sans-serif; letter-spacing: -.12px; color: #000; }
col.rh { width: 33px; }
col.c { width: 90px; }
.sheet th { background: #eee; font-weight: 400; color: #333; text-align: center; padding: 0; font: 13px Lato, sans-serif; height: 19px; border-right: 1px solid #808080; border-bottom: 1px solid #808080; }
.sheet thead th { border-right-color: #999; border-bottom-color: #707070; }
.sheet th.on { background: #0078d7; color: #fff; font-weight: 700; }
.sheet td { position: relative; height: 19px; padding: 0 2px 0 1px; white-space: nowrap; overflow: hidden; border-right: 1px solid #c0c0c0; border-bottom: 1px solid #c0c0c0; line-height: 18px; }
.sheet tr.last td, .sheet tr.last th { border-bottom: 0; }
.sheet tr.last th { border-right: 0; }
.sheet td.b { font-weight: 700; letter-spacing: 0; }
.sheet td.n { text-align: right; }
.sheet td.ov { overflow: visible; border-right: 0; }
.sheet td.nr { border-right: 0; }
.sheet td.cl::after { content: ""; position: absolute; right: 0; top: 5px; border-left: 4px solid #e00; border-top: 4px solid transparent; border-bottom: 4px solid transparent; }
.wv { text-decoration: underline wavy #f03838 1.4px; text-underline-offset: 1px; }
.sheet td.cursor { overflow: visible; outline: 2px solid #000; outline-offset: -2px; }
.handle { position: absolute; right: -2px; bottom: -2px; width: 5px; height: 5px; background: #000; }

.vscroll { flex: 1; display: flex; flex-direction: column; background: #f0f0f0; position: relative; }
.vsplit { flex: none; height: 5px; background: #a0a0a0; padding: 1px 4px 0; }
.vsplit i { display: block; height: 2px; background: #000; }
.sa { display: block; width: 16px; height: 18px; flex: none; }
.vthumb { width: 15px; height: 125px; margin-left: 1px; background: #cdcdcd; }
.sa.down { margin-top: auto; margin-bottom: 1px; }

.hscroll { flex: none; height: 15px; display: flex; align-items: stretch; }
.sa.h { height: 15px; }
.hthumb { width: 535px; background: #cdcdcd; }
.sa.end { margin-left: auto; margin-right: 2px; }
.hsplit { width: 5px; margin-right: 16px; background: #aaa; padding: 3px 1px; }
.hsplit i { display: block; width: 2px; height: 9px; background: #000; }

.tabs { flex: none; height: 23px; display: flex; align-items: center; padding-left: 13px; }
.nav { width: 90px; height: 16px; margin-top: -2px; }
.plus { width: 14px; height: 14px; margin-left: 1px; margin-top: -1px; }
.tab { width: 80px; height: 23px; margin-left: 10px; background: #fff; border-bottom: 3px solid #6e6e6e; text-align: center; line-height: 19px; }

.sidebar { flex: 1; position: relative; border-left: 1px solid #aaa; display: flex; flex-direction: column; align-items: center; padding-left: 6px; }
.si { display: block; width: 24px; height: 24px; fill: none; stroke: #404040; flex: none; margin-top: 11px; overflow: visible; }
.menuic { margin-top: 3px; margin-bottom: 2px; }
.sibtn { width: 33px; height: 34px; margin-top: 7px; margin-bottom: -6px; display: flex; align-items: center; justify-content: center; background: #c6e2f7; border: 1px solid #90c8f6; }
.sibtn .si { margin: 0; }
.menuic + .si { margin-top: 4px; }
.fx.fxlg { display: block; flex: none; font-size: 28px; margin: 9px 0 0; line-height: 30px; }
.handle2 { position: absolute; left: 0; top: 153px; width: 7px; height: 73px; background: #6e6e6e; }
.handle2 i { position: absolute; left: 1px; top: 31px; border-left: 5px solid #fff; border-top: 5px solid transparent; border-bottom: 5px solid transparent; }

.findbar { flex: none; height: 38px; border-bottom: 1px solid #aaa; padding-left: 12px; display: flex; align-items: center; white-space: nowrap; letter-spacing: -.35px; }
.err { width: 18px; height: 18px; flex: none; }
.findc { width: 250px; margin: 0 0 2px 7px; }
.findc span { color: #888; }
.tri { width: 20px; height: 10px; margin-left: 7px; flex: none; }
.tri + .tri { margin-left: 12px; }
.dim { color: #999; margin-left: 9px; }
.chk { display: block; width: 13px; height: 13px; background: #fff; border: 1px solid #333; margin: 0 4px 0 8px; flex: none; }
.chk + span + .chk { margin-left: 3px; }
.findbar .sep { margin: 0 3px 0 6px; }
.findbar .i { margin-left: 3px; }
.findbar .i + .sep { margin-left: 4px; }

.status { flex: none; height: 21px; display: grid; grid-template-columns: 127px 279px 159px 142px 69px 30px 30px 31px 206px 144px 47px; align-items: stretch; line-height: 24px; white-space: nowrap; letter-spacing: -.35px; }
.status > span { border-left: 1px solid #aaa; display: block; overflow: hidden; }
.status > span:first-child { border-left: 0; padding-left: 11px; }
.status .pg { padding-left: 10px; }
.status .ctr { text-align: center; }
.st { width: 20px; height: 14px; margin-top: 5px; }
.st.sm { width: 12px; height: 12px; }
.status .zoom svg { display: block; width: 132px; height: 12px; margin: 6px 0 0 5px; }
```
